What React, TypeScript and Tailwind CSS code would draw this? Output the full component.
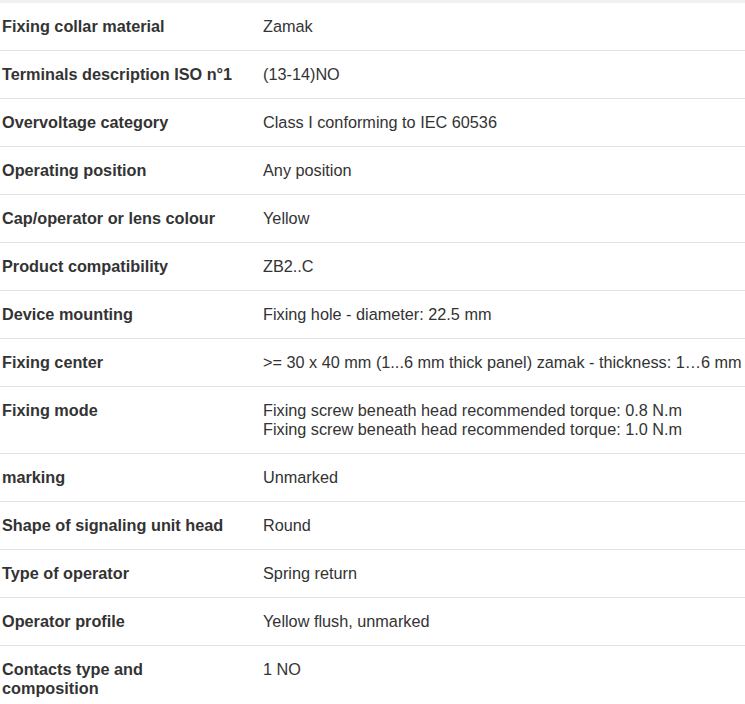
import React from "react";

const rows: [string, string[]][] = [
  ["Fixing collar material", ["Zamak"]],
  ["Terminals description ISO n°1", ["(13-14)NO"]],
  ["Overvoltage category", ["Class I conforming to IEC 60536"]],
  ["Operating position", ["Any position"]],
  ["Cap/operator or lens colour", ["Yellow"]],
  ["Product compatibility", ["ZB2..C"]],
  ["Device mounting", ["Fixing hole - diameter: 22.5 mm"]],
  ["Fixing center", [">= 30 x 40 mm (1...6 mm thick panel) zamak - thickness: 1\u20266 mm"]],
  [
    "Fixing mode",
    [
      "Fixing screw beneath head recommended torque: 0.8 N.m",
      "Fixing screw beneath head recommended torque: 1.0 N.m",
    ],
  ],
  ["marking", ["Unmarked"]],
  ["Shape of signaling unit head", ["Round"]],
  ["Type of operator", ["Spring return"]],
  ["Operator profile", ["Yellow flush, unmarked"]],
  ["Contacts type and composition", ["1 NO"]],
];

export default function App() {
  return (
    <div
      className="w-[745px] h-[704px] overflow-hidden bg-white text-[#333333]"
      style={{ fontFamily: '"Liberation Sans", Arial, sans-serif' }}
    >
      <div className="h-[3px] bg-[#f0f0f0]" />
      {rows.map(([label, values], i) => (
        <div
          key={i}
          className="flex border-b border-[#e3e3e3] py-[14px] text-[16.25px] leading-[19px]"
        >
          <div className="w-[263px] shrink-0 pl-[2px] pr-[24px] font-bold">{label}</div>
          <div className="flex-1 whitespace-nowrap">
            {values.map((v, j) => (
              <div key={j}>{v}</div>
            ))}
          </div>
        </div>
      ))}
    </div>
  );
}
